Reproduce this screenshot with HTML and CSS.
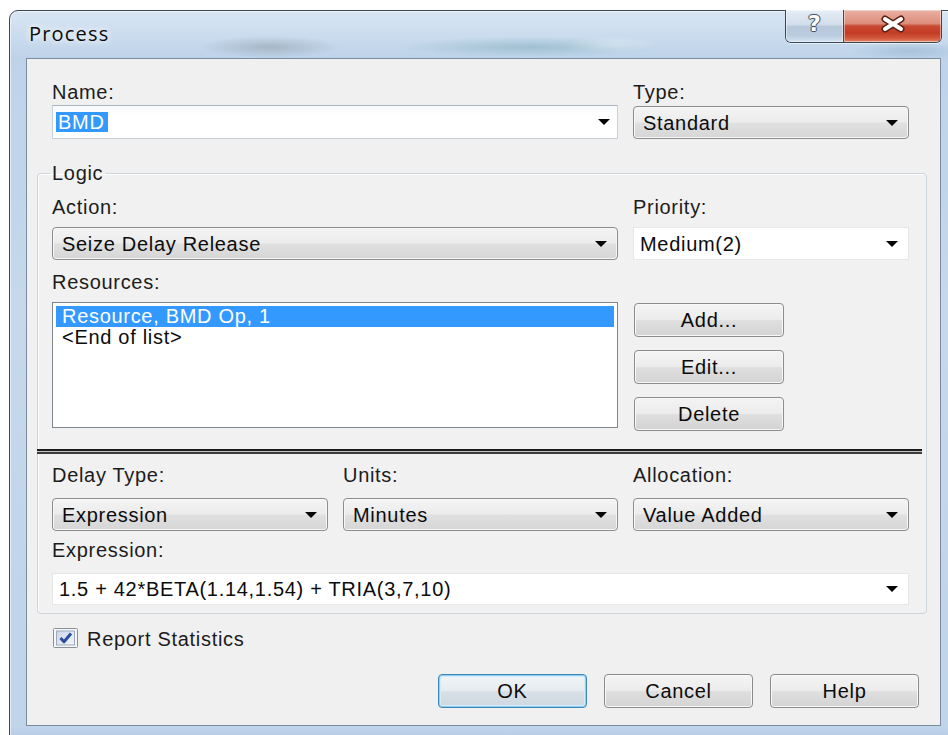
FILE: index.html
```html
<!DOCTYPE html>
<html lang="en">
<head>
<meta charset="utf-8">
<title>Process</title>
<link rel="stylesheet" href="styles.css">
</head>
<body>
<div class="window">
  <div class="titlebar">
    <span class="title">Process</span>
    <div class="caption-buttons">
      <button class="cap-btn cap-help" type="button"><span class="cap-q">?</span></button>
      <button class="cap-btn cap-close" type="button">
        <svg width="26" height="18" viewBox="0 0 26 18" aria-hidden="true">
          <path d="M5 4 L21 14 M5 14 L21 4" stroke="#5a2218" stroke-width="7" stroke-linecap="round"/>
          <path d="M5 4 L21 14 M5 14 L21 4" stroke="#ffffff" stroke-width="4" stroke-linecap="round"/>
        </svg>
      </button>
    </div>
  </div>

  <div class="client">
    <div class="grid-two">
      <label class="lbl lbl-top">Name:</label>
      <label class="lbl lbl-top">Type:</label>
      <div class="combo edit name-field"><span class="sel-text">BMD</span><i class="arrow"></i></div>
      <div class="combo droplist tall"><span>Standard</span><i class="arrow"></i></div>
    </div>

    <fieldset class="group">
      <legend>Logic</legend>
      <div class="grid-two">
        <label class="lbl lbl-logic">Action:</label>
        <label class="lbl lbl-logic">Priority:</label>
        <div class="combo droplist"><span>Seize Delay Release</span><i class="arrow"></i></div>
        <div class="combo plain"><span>Medium(2)</span><i class="arrow"></i></div>
      </div>

      <label class="lbl lbl-res">Resources:</label>
      <div class="grid-two res-row">
        <div class="listbox">
          <div class="list-item selected">Resource, BMD Op, 1</div>
          <div class="list-item">&lt;End of list&gt;</div>
        </div>
        <div class="side-buttons">
          <button class="btn" type="button">Add...</button>
          <button class="btn" type="button">Edit...</button>
          <button class="btn" type="button">Delete</button>
        </div>
      </div>

      <div class="separator"></div>

      <div class="grid-three">
        <label class="lbl lbl-delay">Delay Type:</label>
        <label class="lbl lbl-delay">Units:</label>
        <label class="lbl lbl-delay">Allocation:</label>
        <div class="combo droplist"><span>Expression</span><i class="arrow"></i></div>
        <div class="combo droplist"><span>Minutes</span><i class="arrow"></i></div>
        <div class="combo droplist"><span>Value Added</span><i class="arrow"></i></div>
      </div>

      <label class="lbl lbl-expr">Expression:</label>
      <div class="combo plain expr-field"><span>1.5 + 42*BETA(1.14,1.54) + TRIA(3,7,10)</span><i class="arrow"></i></div>
    </fieldset>

    <div class="check-row">
      <svg class="checkbox" width="25" height="20" viewBox="0 0 25 20" aria-hidden="true">
        <defs>
          <linearGradient id="cbfill" x1="0" y1="0" x2="1" y2="1">
            <stop offset="0" stop-color="#cbd6e6"/>
            <stop offset="1" stop-color="#f4f7fb"/>
          </linearGradient>
        </defs>
        <rect x="0.5" y="0.5" width="24" height="19" rx="1" fill="#f6f7f9" stroke="#8a8f98"/>
        <rect x="3.5" y="3" width="18" height="14" fill="url(#cbfill)" stroke="#9aa9bf"/>
        <path d="M7.5 10 L11 13.8 L18 5.5" fill="none" stroke="#2b4f9e" stroke-width="3" stroke-linejoin="round"/>
      </svg>
      <span class="check-label">Report Statistics</span>
    </div>

    <div class="dialog-buttons">
      <button class="btn btn-dlg btn-default" type="button">OK</button>
      <button class="btn btn-dlg" type="button">Cancel</button>
      <button class="btn btn-dlg" type="button">Help</button>
    </div>
  </div>
</div>
</body>
</html>
```

FILE: styles.css
```css
html, body {
  margin: 0;
  padding: 0;
}

body {
  width: 948px;
  height: 735px;
  overflow: hidden;
  background: #ffffff;
  font-family: "Liberation Sans", Arial, sans-serif;
  font-size: 20px;
  letter-spacing: 0.7px;
  color: #151515;
}

/* ---------- window frame (Aero glass) ---------- */
.window {
  margin: 10px 0 0 9px;
  width: 960px;
  height: 740px;
  box-sizing: border-box;
  border: 1px solid #3a4858;
  border-radius: 9px 9px 0 0;
  padding: 0 0 0 16px;
  box-shadow: inset 0 0 0 1px rgba(255, 255, 255, 0.55);
  background:
    radial-gradient(ellipse 70px 11px at 260px 36px, rgba(110, 122, 130, 0.35), rgba(110, 122, 130, 0)),
    radial-gradient(ellipse 130px 10px at 520px 36px, rgba(92, 150, 160, 0.35), rgba(92, 150, 160, 0)),
    radial-gradient(ellipse 50px 8px at 600px 34px, rgba(235, 245, 250, 0.6), rgba(235, 245, 250, 0)),
    radial-gradient(ellipse 60px 9px at 900px 40px, rgba(120, 160, 190, 0.35), rgba(120, 160, 190, 0)),
    linear-gradient(180deg, #d9e6f3 0px, #c9dbee 26px, #bed3e9 47px, #c5d8ec 300px, #c0d4ea 716px, #a9c2dd 740px);
}

.titlebar {
  display: flex;
  align-items: flex-start;
  width: 915px;
  height: 47px;
}

.title {
  margin: 10.5px 0 0 3px;
  font-family: "Open Sans", "Noto Sans", sans-serif;
  font-size: 20px;
  line-height: 24px;
  letter-spacing: 1.2px;
  color: #0a0a0a;
  text-shadow: 0 0 6px rgba(255, 255, 255, 0.95), 0 0 10px rgba(255, 255, 255, 0.8);
}

.caption-buttons {
  display: flex;
  margin: -1px -1px 0 auto;
  border: 1px solid #3a4756;
  border-top: none;
  border-radius: 0 0 6px 6px;
  overflow: hidden;
  box-shadow: 0 1px 0 rgba(255, 255, 255, 0.6);
}

.cap-btn {
  display: flex;
  align-items: center;
  justify-content: center;
  height: 32px;
  margin: 0;
  padding: 0 0 4px;
  border: none;
  box-shadow: inset 0 0 0 1px rgba(255, 255, 255, 0.45);
}

.cap-help {
  width: 58px;
  border-right: 1px solid #3a4756;
  background: linear-gradient(180deg, #e6eef6 0%, #d2deeb 45%, #b7c8db 52%, #bccce0 80%, #d5e3f0 100%);
}

.cap-q {
  font-family: "DejaVu Sans", sans-serif;
  font-weight: bold;
  font-size: 22px;
  line-height: 22px;
  letter-spacing: 0;
  color: #ffffff;
  text-shadow: -1px 0 #45525f, 1px 0 #45525f, 0 -1px #45525f, 0 1px #45525f, 0 0 2px #45525f;
}

.cap-close {
  width: 97px;
  background: linear-gradient(180deg, #eab0a2 0%, #dd8e7b 42%, #c84a33 50%, #c33b25 72%, #d45c40 90%, #e58c6e 100%);
}

/* ---------- client area ---------- */
.client {
  width: 915px;
  height: 668px;
  box-sizing: border-box;
  border: 1px solid #7b8c9f;
  background: #f0f0f0;
  padding: 21px 31px 0 25px;
}

.grid-two {
  display: grid;
  grid-template-columns: 566px 276px;
  column-gap: 15px;
}

.grid-three {
  display: grid;
  grid-template-columns: 276px 275px 276px;
  column-gap: 15px;
}

.lbl {
  display: block;
  line-height: 24px;
  color: #1c1c1c;
}

.lbl-top { margin-bottom: 1px; }
.lbl-logic { margin-bottom: 8px; }
.lbl-res { margin: 10px 0 8px; }
.lbl-delay { margin: 9px 0 11px; }
.lbl-expr { margin: 7px 0 11px; }

/* ---------- combo boxes ---------- */
.combo {
  display: flex;
  align-items: center;
  box-sizing: border-box;
  height: 33px;
  padding: 0 10px 0 9px;
  line-height: 24px;
  color: #0c0c0c;
  white-space: nowrap;
}

.combo.tall { height: 33px; margin-top: 1px; }

.droplist {
  border: 1px solid #8b8d90;
  border-radius: 4px;
  box-shadow: inset 0 0 0 1px #f7f7f7;
  background: linear-gradient(180deg, #f4f4f4 0%, #ececec 48%, #e0e0e0 52%, #d6d6d6 100%);
}

.edit {
  height: 34px;
  border: 1px solid #c7d0da;
  border-top-color: #aeb7c1;
  background: linear-gradient(180deg, #f7fafd 0%, #ffffff 30%, #ffffff 100%);
  padding-left: 3px;
  padding-right: 7px;
}

.plain {
  border: 1px solid #e4e6e8;
  background: #ffffff;
  padding-left: 6px;
}

.expr-field { height: 32px; }

.sel-text {
  display: inline-block;
  line-height: 20px;
  padding: 0 3px 0 2px;
  background: #3399ff;
  color: #ffffff;
}

.arrow {
  display: block;
  width: 0;
  height: 0;
  margin-left: auto;
  border-left: 6px solid transparent;
  border-right: 6px solid transparent;
  border-top: 6px solid #050505;
}

/* ---------- group box ---------- */
.group {
  margin: 22px -18px 0 -15px;
  padding: 10px 17px 8px 14px;
  min-width: 0;
  border: 1px solid #ccd4dc;
  border-radius: 4px;
  box-shadow: inset 1px 1px 0 #ffffff;
  background: #f1f1f1;
}

.group legend {
  padding: 0 2px;
  margin-left: -2px;
  line-height: 24px;
  color: #1c1c1c;
}

/* ---------- resources list ---------- */
.listbox {
  box-sizing: border-box;
  height: 126px;
  border: 1px solid #7f858c;
  background: #ffffff;
  padding: 3px 3px 0 3px;
}

.list-item {
  line-height: 21px;
  padding-left: 6px;
  color: #0c0c0c;
  white-space: nowrap;
}

.list-item.selected {
  background: #3399ff;
  color: #ffffff;
}

.side-buttons {
  display: flex;
  flex-direction: column;
  gap: 13px;
  padding: 1px 0 0 1px;
}

.btn {
  display: flex;
  align-items: center;
  justify-content: center;
  box-sizing: border-box;
  width: 150px;
  height: 34px;
  margin: 0;
  padding: 0;
  border: 1px solid #8a8c8f;
  border-radius: 4px;
  box-shadow: inset 0 0 0 1px #f8f8f8;
  background: linear-gradient(180deg, #f4f4f4 0%, #ececec 48%, #dfdfdf 52%, #d3d3d3 100%);
  font-family: "Liberation Sans", Arial, sans-serif;
  font-size: 20px;
  letter-spacing: 0.7px;
  color: #0c0c0c;
}

/* double rule between resources and delay settings */
.separator {
  height: 1px;
  margin: 18px -13px 0 -15px;
  border-top: 2px solid #1d1d1d;
  border-bottom: 2px solid #3b3b3b;
  background: #c4c4c4;
}

/* ---------- bottom of dialog ---------- */
.check-row {
  display: flex;
  align-items: center;
  height: 24px;
  margin-top: 13px;
  padding-left: 1px;
}

.checkbox {
  display: block;
  flex: none;
  margin-top: -2px;
}

.check-label {
  margin-left: 9px;
  line-height: 24px;
  color: #1c1c1c;
}

.dialog-buttons {
  display: flex;
  justify-content: flex-end;
  gap: 17px;
  margin: 23px -10px 0 0;
}

.btn-dlg {
  width: 149px;
}

.btn-default {
  border-color: #3f86b8;
  box-shadow: inset 0 0 0 1px #8fd0f2, inset 0 0 0 2px #d4ecf8;
  background: linear-gradient(180deg, #f0f4f7 0%, #e6ecf0 48%, #d8e0e6 52%, #ced8e0 100%);
}
```
